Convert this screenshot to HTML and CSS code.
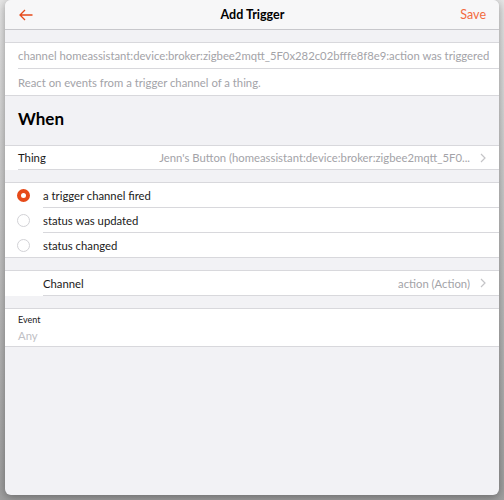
FILE: index.html
```html
<!DOCTYPE html>
<html lang="en">
<head>
    <meta charset="UTF-8">
    <title>Add Trigger</title>
    <link rel="stylesheet" href="styles.css">
</head>
<body>

    <div class="popup">
        <!-- top bar -->
        <div class="navbar">
            <span class="nav-left">
                <svg width="14" height="12" viewBox="0 0 14 12">
                    <path d="M 13.5 6 L 1 6 M 6 1 L 1 6 L 6 11" fill="none" stroke="#e64a19" stroke-width="1.3"></path>
                </svg>
            </span>
            <span class="nav-title">Add Trigger</span>
            <span class="nav-right">Save</span>
        </div>

        <div class="page">
            <ul class="list list-info">
                <li class="item"><div class="item-inner muted">channel homeassistant:device:broker:zigbee2mqtt_5F0x282c02bfffe8f8e9:action was triggered</div></li>
                <li class="item"><div class="item-inner muted">React on events from a trigger channel of a thing.</div></li>
            </ul>

            <h2 class="block-title">When</h2>

            <ul class="list list-links list-thing">
                <li class="item">
                    <div class="item-inner">
                        <span class="item-title">Thing</span>
                        <span class="item-after">Jenn's Button (homeassistant:device:broker:zigbee2mqtt_5F0...</span>
                        <svg class="chevron" width="6" height="10" viewBox="0 0 6 10"><path d="M 1 1 L 5 5 L 1 9" fill="none" stroke="#c4c4c7" stroke-width="1.2"></path></svg>
                    </div>
                </li>
            </ul>

            <ul class="list list-radio">
                <li class="item">
                    <span class="radio checked"></span>
                    <div class="item-inner">a trigger channel fired</div>
                </li>
                <li class="item">
                    <span class="radio"></span>
                    <div class="item-inner">status was updated</div>
                </li>
                <li class="item">
                    <span class="radio"></span>
                    <div class="item-inner">status changed</div>
                </li>
            </ul>

            <ul class="list list-links list-indent">
                <li class="item">
                    <div class="item-inner">
                        <span class="item-title">Channel</span>
                        <span class="item-after">action (Action)</span>
                        <svg class="chevron" width="6" height="10" viewBox="0 0 6 10"><path d="M 1 1 L 5 5 L 1 9" fill="none" stroke="#c4c4c7" stroke-width="1.2"></path></svg>
                    </div>
                </li>
            </ul>

            <ul class="list list-input">
                <li class="item">
                    <div class="item-inner input-inner">
                        <span class="input-label">Event</span>
                        <span class="input-value">Any</span>
                    </div>
                </li>
            </ul>
        </div>
    </div>

</body>
</html>
```

FILE: styles.css
```css
:root {
    --color-accent: #e64a19;
    --color-accent-light: #f26b3f;
    --color-bg: #f2f2f5;
    --color-line: #d8d8dc;
    --color-text: #1a1a1a;
    --color-muted: #a3a3a8;
    --font-family: "Lato", "Noto Sans", sans-serif;
}

html, body {
    margin: 0;
    height: 100%;
}

body {
    font-family: var(--font-family);
    background: linear-gradient(#e6e6e6, #9f9f9f);
    padding: 0 5px 5px;
    box-sizing: border-box;
}

.popup {
    height: 495px;
    background-color: var(--color-bg);
    border-radius: 6px;
    overflow: hidden;
    box-shadow: 0 2px 10px rgba(0, 0, 0, 0.35);
}

/* --- navbar --- */
.navbar {
    height: 30px;
    display: flex;
    align-items: center;
    justify-content: space-between;
    padding: 0 13px 0 14px;
    background-color: #f7f7f8;
    border-bottom: 1px solid #c8c8cc;
    box-sizing: border-box;
}

.nav-left {
    width: 40px;
    display: flex;
}

.nav-title {
    font-size: 12.5px;
    font-weight: 700;
    color: #000;
}

.nav-right {
    width: 40px;
    text-align: right;
    font-size: 12.5px;
    color: var(--color-accent-light);
}

.page {
    padding-top: 12px;
}

/* --- lists --- */
.list {
    list-style: none;
    margin: 0 0 12px;
    padding: 0;
    background-color: #fff;
    border-top: 1px solid var(--color-line);
    border-bottom: 1px solid var(--color-line);
    font-size: 11.3px;
    color: var(--color-text);
}

.item {
    display: flex;
    align-items: center;
    padding-left: 13px;
}

.item-inner {
    flex: 1;
    min-width: 0;
    display: flex;
    align-items: center;
    height: 25px;
    padding-right: 13px;
    white-space: nowrap;
    border-bottom: 1px solid var(--color-line);
    box-sizing: border-box;
}

.item:last-child .item-inner {
    border-bottom: none;
    height: 24px;
}

.list-info .item-inner {
    height: 26px;
}

.list-info .item:last-child .item-inner {
    height: 26px;
}

.muted {
    color: var(--color-muted);
}

/* link rows keep their inner line, the list has none below */
.list-links {
    border-bottom: none;
}

.list-links .item:last-child .item-inner {
    border-bottom: 1px solid var(--color-line);
    height: 25px;
}

.list-thing .item:last-child .item-inner {
    height: 24px;
}

.item-title {
    flex: 1;
}

.item-after {
    color: var(--color-muted);
    overflow: hidden;
}

.chevron {
    margin-left: 10px;
    flex-shrink: 0;
}

.block-title {
    margin: -12px 0 0;
    padding: 12px 13px 16px;
    font-size: 17px;
    line-height: 21px;
    font-weight: 700;
    color: #000;
}

.list-indent .item {
    padding-left: 38px;
}

/* radio rows */
.radio {
    width: 13px;
    height: 13px;
    margin-right: 13px;
    border: 1px solid #d2d2d6;
    border-radius: 50%;
    box-sizing: border-box;
    flex-shrink: 0;
}

.radio.checked {
    border: 4px solid var(--color-accent);
    background-color: #fff;
}

.list-radio .item {
    padding-left: 12px;
}

/* input row */
.input-inner {
    flex-direction: column;
    align-items: flex-start;
    justify-content: center;
}

.list-input .item:last-child .item-inner {
    height: 37px;
}

.input-label {
    font-size: 9px;
    line-height: 12px;
}

.input-value {
    margin-top: 3px;
    color: #c0c0c4;
}
```
